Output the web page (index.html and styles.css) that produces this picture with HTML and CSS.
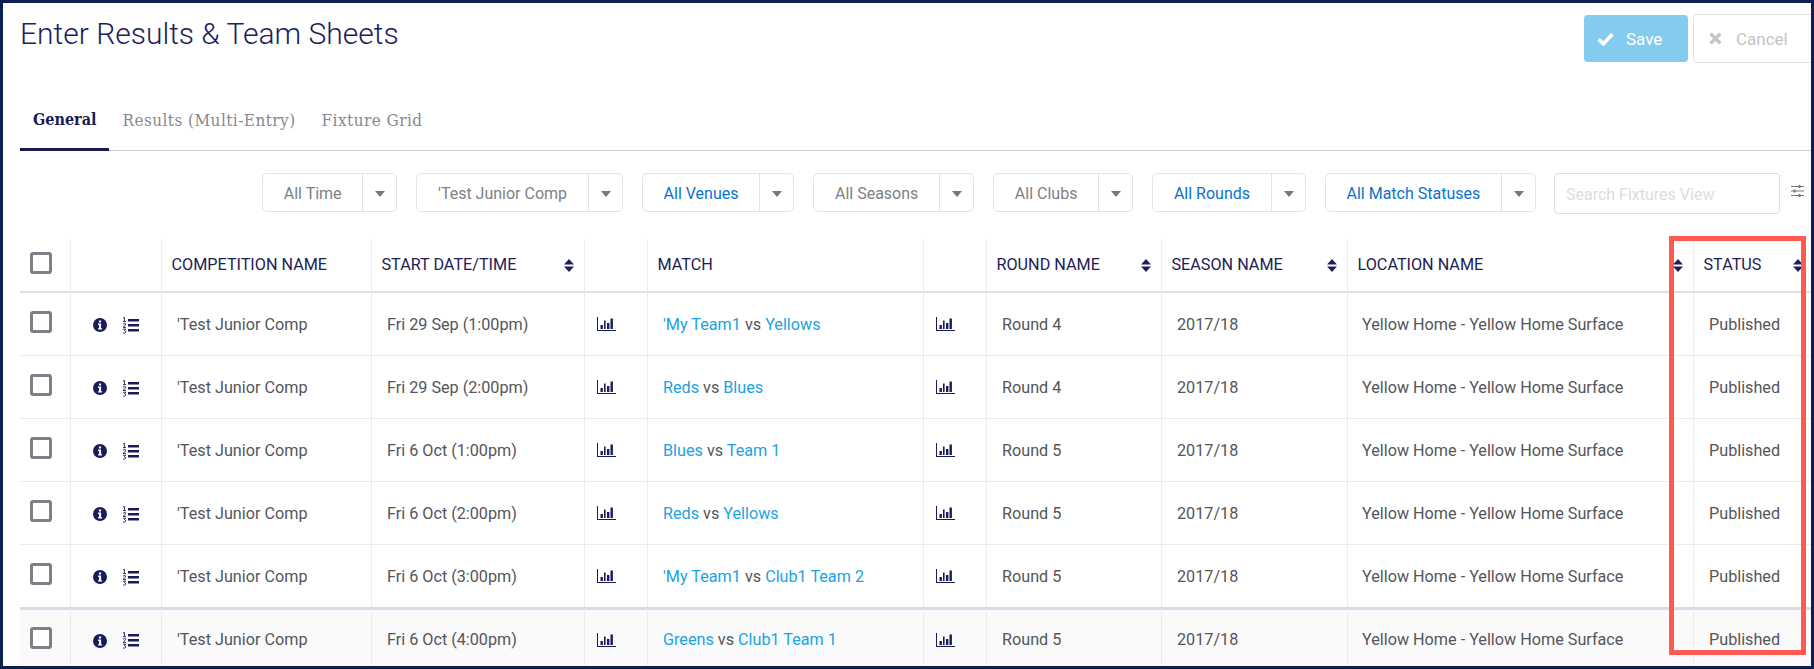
FILE: index.html
```html
<!DOCTYPE html>
<html lang="en">
<head>
<meta charset="utf-8">
<title>Enter Results &amp; Team Sheets</title>
<link rel="stylesheet" href="styles.css">
</head>
<body>
<svg class="defs" width="0" height="0" aria-hidden="true">
  <symbol id="sort" viewBox="0 0 10 13"><path d="M5 0 10 5.4H0ZM0 7.6H10L5 13Z"/></symbol>
  <symbol id="info" viewBox="0 0 14 14"><path fill-rule="evenodd" d="M7 0a7 7 0 1 0 0 14A7 7 0 0 0 7 0ZM5.9 2.4h2.2v2.1H5.9ZM5 5.6h3.1v4.6h1v1.4H5v-1.4h1V7H5Z"/></symbol>
  <symbol id="list" viewBox="0 0 17 17"><path d="M6 2h11v2.4H6ZM6 7h11v2.4H6ZM6 12h11v2.4H6Z"/><path d="M1 1 2.4.3V4.6M1 4.6h3M1 7.2Q2.4 5.9 3.6 6.8 4 8.2 1 10.4H4M1 12.2H3.8L2.3 13.6Q4 13.8 3.8 15.2 3 16.6 1 16" fill="none" stroke="currentColor" stroke-width=".9"/></symbol>
  <symbol id="chart" viewBox="0 0 19 14"><path d="M0 0h1v13h18v1H0Z"/><path d="M3.5 8h2.4v4H3.5ZM7 3.5h1.6V12H7ZM10 6h2.4v6H10ZM13.5 1.5h2.4V12h-2.4Z"/></symbol>
</svg>
<div class="frame">
  <header class="top">
    <h1 class="title">Enter Results &amp; Team Sheets</h1>
    <div class="actions">
      <button class="btn btn-save"><svg class="btn-icon" viewBox="0 0 16 13"><path d="M1.5 6.8 6 11 14.5 2" fill="none" stroke="currentColor" stroke-width="3.4"/></svg>Save</button>
      <button class="btn btn-cancel"><svg class="btn-icon btn-icon-x" viewBox="0 0 12 12"><path d="M1.5 1.5 10.5 10.5M10.5 1.5 1.5 10.5" fill="none" stroke="currentColor" stroke-width="3.2"/></svg>Cancel</button>
    </div>
  </header>

  <nav class="tabs">
    <a class="tab tab-active">General</a>
    <a class="tab">Results (Multi-Entry)</a>
    <a class="tab">Fixture Grid</a>
  </nav>

  <div class="filters">
    <div class="select"><span class="select-label">All Time</span><span class="select-caret"></span></div>
    <div class="select"><span class="select-label">'Test Junior Comp</span><span class="select-caret"></span></div>
    <div class="select select-on"><span class="select-label">All Venues</span><span class="select-caret"></span></div>
    <div class="select"><span class="select-label">All Seasons</span><span class="select-caret"></span></div>
    <div class="select"><span class="select-label">All Clubs</span><span class="select-caret"></span></div>
    <div class="select select-on"><span class="select-label">All Rounds</span><span class="select-caret"></span></div>
    <div class="select select-on"><span class="select-label">All Match Statuses</span><span class="select-caret"></span></div>
    <div class="search">Search Fixtures View</div>
    <svg class="sliders" viewBox="0 0 13 12"><path d="M0 1.5h13M0 6h13M0 10.5h13" stroke="#77777c" stroke-width="1" fill="none"/><path d="M7.5 0h2v3h-2ZM2.5 4.5h2v3h-2ZM7.5 9h2v3h-2Z" fill="#77777c"/></svg>
  </div>

  <div class="table-wrap">
    <table class="grid">
      <colgroup>
        <col class="c1"><col class="c2"><col class="c3"><col class="c4"><col class="c5"><col class="c6"><col class="c7"><col class="c8"><col class="c9"><col class="c10"><col class="c11">
      </colgroup>
      <thead>
        <tr>
          <th class="cell-check"><span class="check"></span></th>
          <th></th>
          <th>COMPETITION NAME</th>
          <th><span class="th-in">START DATE/TIME<svg class="sort"><use href="#sort"/></svg></span></th>
          <th></th>
          <th>MATCH</th>
          <th></th>
          <th><span class="th-in">ROUND NAME<svg class="sort"><use href="#sort"/></svg></span></th>
          <th><span class="th-in">SEASON NAME<svg class="sort"><use href="#sort"/></svg></span></th>
          <th><span class="th-in">LOCATION NAME<svg class="sort"><use href="#sort"/></svg></span></th>
          <th><span class="th-in">STATUS<svg class="sort"><use href="#sort"/></svg></span></th>
        </tr>
      </thead>
      <tbody>
        <tr>
          <td class="cell-check"><span class="check"></span></td>
          <td class="cell-icons"><svg class="ic-info"><use href="#info"/></svg><svg class="ic-list"><use href="#list"/></svg></td>
          <td>'Test Junior Comp</td><td>Fri 29 Sep (1:00pm)</td>
          <td class="cell-chart"><svg class="ic-chart"><use href="#chart"/></svg></td>
          <td><a class="team">'My Team1</a> vs <a class="team">Yellows</a></td>
          <td class="cell-chart"><svg class="ic-chart"><use href="#chart"/></svg></td>
          <td>Round 4</td><td>2017/18</td><td class="cell-location">Yellow Home - Yellow Home Surface</td><td>Published</td>
        </tr>
        <tr>
          <td class="cell-check"><span class="check"></span></td>
          <td class="cell-icons"><svg class="ic-info"><use href="#info"/></svg><svg class="ic-list"><use href="#list"/></svg></td>
          <td>'Test Junior Comp</td><td>Fri 29 Sep (2:00pm)</td>
          <td class="cell-chart"><svg class="ic-chart"><use href="#chart"/></svg></td>
          <td><a class="team">Reds</a> vs <a class="team">Blues</a></td>
          <td class="cell-chart"><svg class="ic-chart"><use href="#chart"/></svg></td>
          <td>Round 4</td><td>2017/18</td><td class="cell-location">Yellow Home - Yellow Home Surface</td><td>Published</td>
        </tr>
        <tr>
          <td class="cell-check"><span class="check"></span></td>
          <td class="cell-icons"><svg class="ic-info"><use href="#info"/></svg><svg class="ic-list"><use href="#list"/></svg></td>
          <td>'Test Junior Comp</td><td>Fri 6 Oct (1:00pm)</td>
          <td class="cell-chart"><svg class="ic-chart"><use href="#chart"/></svg></td>
          <td><a class="team">Blues</a> vs <a class="team">Team 1</a></td>
          <td class="cell-chart"><svg class="ic-chart"><use href="#chart"/></svg></td>
          <td>Round 5</td><td>2017/18</td><td class="cell-location">Yellow Home - Yellow Home Surface</td><td>Published</td>
        </tr>
        <tr>
          <td class="cell-check"><span class="check"></span></td>
          <td class="cell-icons"><svg class="ic-info"><use href="#info"/></svg><svg class="ic-list"><use href="#list"/></svg></td>
          <td>'Test Junior Comp</td><td>Fri 6 Oct (2:00pm)</td>
          <td class="cell-chart"><svg class="ic-chart"><use href="#chart"/></svg></td>
          <td><a class="team">Reds</a> vs <a class="team">Yellows</a></td>
          <td class="cell-chart"><svg class="ic-chart"><use href="#chart"/></svg></td>
          <td>Round 5</td><td>2017/18</td><td class="cell-location">Yellow Home - Yellow Home Surface</td><td>Published</td>
        </tr>
        <tr class="row-before-hover">
          <td class="cell-check"><span class="check"></span></td>
          <td class="cell-icons"><svg class="ic-info"><use href="#info"/></svg><svg class="ic-list"><use href="#list"/></svg></td>
          <td>'Test Junior Comp</td><td>Fri 6 Oct (3:00pm)</td>
          <td class="cell-chart"><svg class="ic-chart"><use href="#chart"/></svg></td>
          <td><a class="team">'My Team1</a> vs <a class="team">Club1 Team 2</a></td>
          <td class="cell-chart"><svg class="ic-chart"><use href="#chart"/></svg></td>
          <td>Round 5</td><td>2017/18</td><td class="cell-location">Yellow Home - Yellow Home Surface</td><td>Published</td>
        </tr>
        <tr class="row-hover">
          <td class="cell-check"><span class="check"></span></td>
          <td class="cell-icons"><svg class="ic-info"><use href="#info"/></svg><svg class="ic-list"><use href="#list"/></svg></td>
          <td>'Test Junior Comp</td><td>Fri 6 Oct (4:00pm)</td>
          <td class="cell-chart"><svg class="ic-chart"><use href="#chart"/></svg></td>
          <td><a class="team">Greens</a> vs <a class="team">Club1 Team 1</a></td>
          <td class="cell-chart"><svg class="ic-chart"><use href="#chart"/></svg></td>
          <td>Round 5</td><td>2017/18</td><td class="cell-location">Yellow Home - Yellow Home Surface</td><td>Published</td>
        </tr>
      </tbody>
    </table>
  </div>
  <div class="highlight"></div>
</div>
</body>
</html>
```
FILE: styles.css
```css
* { box-sizing: border-box; }
html, body { margin: 0; height: 100%; background: #fff; }
body { font-family: Roboto, "Liberation Sans", sans-serif; overflow: hidden; }
.defs { position: absolute; }

.frame {
  position: relative;
  width: 1814px;
  height: 669px;
  border: 3px solid #0b2050;
  overflow: hidden;
  background: #fff;
}

.top {
  display: flex;
  justify-content: space-between;
  align-items: flex-start;
  height: 91px;
  padding: 12px 0 0 17px;
}
.title {
  margin: 0;
  font-size: 30px;
  line-height: 38px;
  font-weight: 300;
  color: #1d1e5c;
}
.actions { display: flex; align-items: center; gap: 5px; margin-right: -15px; margin-top: -1px; }
.btn {
  display: flex;
  align-items: center;
  font-family: inherit;
  font-size: 17px;
  border-radius: 4px;
  padding: 0;
}
.btn-save {
  width: 104px;
  height: 47px;
  background: #83cbef;
  border: 0;
  color: #fff;
  padding-left: 13px;
}
.btn-cancel {
  width: 133px;
  height: 49px;
  background: #fff;
  border: 1px solid #e2e2e2;
  color: #c4c4c6;
  padding-left: 15px;
}
.btn-icon { width: 17px; height: 14px; margin-right: 12px; }
.btn-icon-x { width: 13px; height: 13px; margin-right: 14px; }

.tabs {
  display: flex;
  margin-left: 17px;
  height: 57px;
  padding-top: 12px;
  border-bottom: 1.5px solid #cfcfd2;
}
.tab {
  font-family: "DejaVu Serif Condensed", "DejaVu Serif", serif;
  font-size: 17px;
  letter-spacing: .45px;
  line-height: 28px;
  padding: 0 13px;
  height: 45px;
  color: #88888e;
}
.tab-active {
  font-size: 16px;
  letter-spacing: 0;
  font-weight: 700;
  color: #171a54;
  border-bottom: 3px solid #171a54;
}

.filters {
  display: flex;
  justify-content: flex-end;
  align-items: flex-start;
  gap: 19px;
  height: 88px;
  padding: 22px 7px 0 0;
}
.select {
  display: flex;
  align-items: stretch;
  height: 39px;
  border: 1px solid #e4e4e6;
  border-radius: 5px;
  font-size: 16px;
  color: #808086;
}
.select-on { color: #0a72d0; }
.select-label { display: flex; align-items: center; padding: 1px 20.75px 0; white-space: nowrap; }
.select-caret {
  position: relative;
  width: 34px;
  border-left: 1px solid #e4e4e6;
}
.select-caret::after {
  content: "";
  position: absolute;
  left: 12px;
  top: 17px;
  border-left: 5px solid transparent;
  border-right: 5px solid transparent;
  border-top: 6px solid #77777c;
}
.search {
  width: 226px;
  height: 41px;
  margin-left: -1px;
  padding: 1px 0 0 11px;
  display: flex;
  align-items: center;
  border: 1.5px solid #dedee0;
  border-radius: 4px;
  font-size: 16px;
  color: #dcdcde;
  white-space: nowrap;
}
.sliders { width: 13px; height: 12px; margin: 12px 0 0 -8px; }

.table-wrap { margin-left: 17px; }
.grid {
  table-layout: fixed;
  border-collapse: separate;
  border-spacing: 0;
  width: 1794px;
  font-size: 16.2px;
  color: #55555a;
}
.c1 { width: 51px; } .c2 { width: 91px; } .c3 { width: 210px; } .c4 { width: 213px; }
.c5 { width: 63px; } .c6 { width: 276px; } .c7 { width: 63px; } .c8 { width: 175px; }
.c9 { width: 186px; } .c10 { width: 346px; } .c11 { width: 120px; }

.grid th {
  height: 54px;
  padding: 0 10px 2px 9.5px;
  text-align: left;
  font-weight: 400;
  font-size: 16.2px;
  color: #1e2057;
  border-right: 1px solid #ececee;
  border-bottom: 2px solid #e0e0e2;
  white-space: nowrap;
}
.th-in { display: flex; align-items: center; justify-content: space-between; }
.sort { width: 10px; height: 13px; fill: #1e2057; margin-top: 3px; }

.grid td {
  height: 63px;
  padding: 0 0 0 15px;
  border-right: 1px solid #ececee;
  border-bottom: 1px solid #ececee;
  white-space: nowrap;
}
.grid .cell-location { padding-left: 14px; }
.grid .cell-check { padding: 0 0 4px 10px; }
.check {
  display: block;
  width: 22px;
  height: 22px;
  border: 3px solid #7e7e86;
  border-radius: 3px;
  background: #fff;
}
.grid .cell-icons { padding: 0 0 0 22px; }
.cell-icons svg { vertical-align: middle; fill: #1a1c5a; color: #1a1c5a; }
.ic-info { width: 14px; height: 14px; margin-right: 15px; }
.ic-list { width: 17px; height: 17px; }
.grid .cell-chart { padding: 0 0 0 12px; }
.ic-chart { width: 19px; height: 14px; fill: #1a1c5a; display: block; }
.team { color: #1aa3e3; }

.row-before-hover td { height: 62px; border-bottom: 0; }
.row-hover td { height: 62px; background: #fafafa; border-top: 3px solid #d9dce8; border-bottom: 0; }

.highlight {
  position: absolute;
  left: 1666px;
  top: 233px;
  width: 137px;
  height: 419px;
  border: 5px solid #ff5a52;
}
```
